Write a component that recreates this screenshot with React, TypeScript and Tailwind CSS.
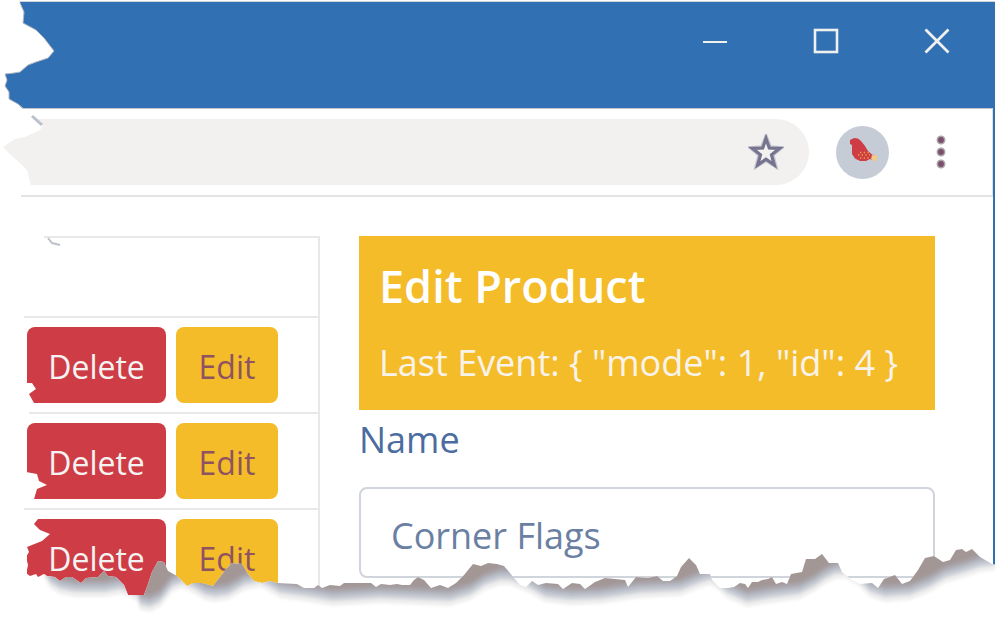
import React from 'react';

const products = [1, 2, 3];

const jagged =
  '0,573 26,573 30,576 36,574 38,577 44,574 47,576 55,577 60,581 66,577 72,577 81,583 86,578 98,577 104,571 108,576 116,577 124,585 128,595 144,595 148,584 152,572 158,561 164,562 168,571 177,576 187,586 193,583 202,583 213,586 220,577 226,569 232,563 242,564 248,574 254,581 262,583 270,581 277,583 297,584 304,588 314,588 318,585 322,588 330,585 340,586 344,583 371,583 376,587 381,584 390,585 397,584 402,585 410,585 414,580 418,577 424,580 431,588 440,585 448,588 456,583 464,575 473,564 481,566 488,563 497,564 504,566 510,573 514,578 520,585 526,587 532,581 538,585 546,583 558,584 563,589 572,583 580,584 585,589 595,582 605,578 625,580 628,587 636,577 648,578 657,576 663,581 670,581 677,576 681,567 689,558 696,565 700,574 710,574 712,580 720,588 728,588 734,587 740,583 745,584 748,588 752,582 758,582 762,580 768,579 772,577 776,584 782,582 787,584 791,574 802,572 806,559 815,559 822,554 829,563 838,563 842,572 852,580 860,584 872,583 878,588 884,579 895,575 902,584 910,581 918,570 925,558 934,556 943,562 950,560 956,550 962,549 966,552 972,549 980,557 992,564 1000,566 1000,620 0,620';

const shade =
  '43,540 43,575 50,588 60,594 75,597 105,597 120,594 130,597 138,602 140,610 150,612 160,607 172,592 182,588 192,592 205,600 215,602 228,600 245,590 260,587 270,592 280,598 310,602 333,606 380,603 450,606 470,600 485,590 500,585 510,585 528,592 545,602 570,605 600,604 640,598 680,596 700,588 710,585 716,588 727,598 747,607 770,603 800,599 815,591 825,584 835,579 845,578 858,585 870,597 885,602 910,600 930,592 945,583 965,577 980,572 995,570 995,540';

function BottomTear() {
  return (
    <svg
      aria-hidden="true"
      className="pointer-events-none absolute bottom-0 left-0 h-[77px] w-full"
      viewBox="0 540 1000 77"
      preserveAspectRatio="none"
    >
      <defs>
        <clipPath id="edge">
          <polygon points={jagged} />
        </clipPath>
        <filter id="soft" x="-5%" y="-20%" width="110%" height="140%">
          <feGaussianBlur stdDeviation="1.5" />
        </filter>
      </defs>
      <g clipPath="url(#edge)">
        <rect y="540" width="1000" height="80" fill="#fff" />
        <g filter="url(#soft)">
          <polygon points={shade} fill="#efeeee" />
          <polygon points={shade} fill="#cdd1d8" transform="translate(0 -5)" />
          <polygon points={shade} fill="#b8bcc6" transform="translate(0 -9)" />
          <polygon points={shade} fill="#a9a5ab" transform="translate(0 -13)" />
          <polygon points={shade} fill="#a39796" transform="translate(0 -17)" />
        </g>
      </g>
    </svg>
  );
}

function LeftTear() {
  return (
    <svg
      aria-hidden="true"
      className="pointer-events-none absolute left-0 top-0"
      width="70"
      height="600"
      viewBox="0 0 70 600"
    >
      <path
        fill="#fff"
        d="M0 0H19L24 12L23 23L36 30L44 38L54 51L48 58L36 62L28 65L20 72L14 73L5 74L7 80L5 86L9 92V99L18 104L23 109L28 112L34 119L43 125L40 130L25 137L15 139L3 147L12 156L20 163L27 170L31 186L21 195V200H0Z"
      />
      <path
        fill="#fff"
        d="M0 225H44V238L30 260L24 300V318L26 324V383L32 383L36 389L29 394L34 403L29 410V416L26 424V472L37 474L39 481L47 485L37 489L34 499L24 506V512L38 519L34 524L40 530L50 534L42 541L27 547L29 552L26 557L28 565L26 575L20 600H0Z"
      />
      <path
        fill="none"
        stroke="#b3b7c0"
        strokeWidth="1"
        d="M20 3L24 12L23 23L36 30L44 38L54 51L48 58L36 62L28 65L20 72L14 73L5 74L7 80L5 86L9 92V99L18 104L23 108"
      />
      <path stroke="#b9c0cc" strokeWidth="3" d="M32 116L42 125" />
      <path fill="none" stroke="#bcc2cc" strokeWidth="2" d="M48 238L52 243L60 245" />
    </svg>
  );
}

const iconButton = 'flex h-8 w-8 items-center justify-center';

export default function App() {
  return (
    <div className="relative overflow-hidden bg-white pr-[5px] pt-px font-['Open_Sans','Noto_Sans',sans-serif]">
      <div className="border-t border-[#cfd3da]">
        <header className="flex h-[106px] items-start justify-end gap-[79px] bg-[#3070b3] pr-[42px] pt-[23px]">
          <button aria-label="Minimize" className={iconButton}>
            <svg width="26" height="26" viewBox="0 0 26 26" fill="none" stroke="#f0f0ef" strokeWidth="2">
              <path d="M1 14H25" />
            </svg>
          </button>
          <button aria-label="Maximize" className={iconButton}>
            <svg width="26" height="26" viewBox="0 0 26 26" fill="none" stroke="#f0f0ef" strokeWidth="2.6">
              <rect x="2" y="2" width="22" height="22" />
            </svg>
          </button>
          <button aria-label="Close" className={iconButton}>
            <svg width="26" height="26" viewBox="0 0 26 26" fill="none" stroke="#f0f0ef" strokeWidth="2.8">
              <path d="M1.500 1.500L24.500 24.500M24.500 1.500L1.500 24.500" />
            </svg>
          </button>
        </header>

        <div className="border-r-2 border-[#3070b3]">
          <nav className="flex h-[89px] items-center border-b-2 border-r border-t border-b-[#e4e4e6] border-r-[#dcdfe4] border-t-[#c2c5cb] pr-[35px]">
            <div className="flex h-[66px] flex-1 items-center justify-end rounded-r-full bg-[#f2f1f0] pr-[27px]">
              <button aria-label="Bookmark" className={iconButton}>
                <svg width="36" height="36" viewBox="0 0 36 36" className="shrink-0" fill="none">
                  <path
                    d="M18 3L22 13.3L33 14L24.5 21L27.4 32L18 26L8.6 32L11.5 21L3 14L14 13.3Z"
                    stroke="#c3c6cf"
                    strokeWidth="4"
                  />
                  <path
                    d="M18 4.5L21.3 14L31.5 14.5L23.5 20.8L26.3 31L18 25.2L9.7 31L12.5 20.8L4.5 14.5L14.7 14Z"
                    stroke="#75738e"
                    strokeWidth="3.2"
                  />
                </svg>
              </button>
            </div>
            <button
              aria-label="Profile"
              className="ml-[27px] flex h-[53px] w-[53px] items-center justify-center rounded-full bg-[#c5ccd6]"
            >
              <svg width="53" height="53" viewBox="0 0 53 53">
                <path
                  fill="#ce3c46"
                  d="M14 14L18 12L22 12.500L25 15L29 20L32 25L36 28.500L39 30L41 31L39 35L34 33L30 35H24L19 32.500L16 28V19L14 18Z"
                />
                <path fill="#f0c98c" d="M36 29L42 30L41 33L39 36L35 33Z" />
                <path stroke="#e9a53c" strokeWidth="1.3" strokeDasharray="1.3 2.4" d="M24 26.500H33M22 29H34M24 32H35" />
              </svg>
            </button>
            <button aria-label="Menu" className="ml-[36px] flex h-[53px] w-8 items-center justify-center">
              <svg width="10" height="34" viewBox="0 0 10 34" fill="#7d4f6c" stroke="#aaa4ab" strokeWidth="1.5">
                <circle cx="5" cy="5" r="3.7" />
                <circle cx="5" cy="17" r="3.7" />
                <circle cx="5" cy="29" r="3.7" />
              </svg>
            </button>
          </nav>

          <main className="flex items-start gap-[39px] pb-[11px] pr-[58px] pt-[39px]">
            <table className="w-[320px] shrink-0 border-collapse border-2 border-[#e8e8e9]">
              <thead>
                <tr className="h-[80px] border-b-2 border-[#e8e8e9]">
                  <th />
                </tr>
              </thead>
              <tbody className="text-[32px] leading-[48px]">
                {products.map((id) => (
                  <tr key={id} className="h-[96px] border-b-2 border-[#e8e8e9]">
                    <td className="p-0 pl-[25px]">
                      <div className="flex gap-[10px]">
                        <button className="h-[76px] w-[139px] rounded-lg bg-[#ce3c46] pt-[3px] text-[#f5f3f2]">
                          Delete
                        </button>
                        <button className="h-[76px] w-[102px] rounded-lg bg-[#f4bc29] pt-[3px] text-[#8f5260]">
                          Edit
                        </button>
                      </div>
                    </td>
                  </tr>
                ))}
              </tbody>
            </table>

            <section className="min-w-0 flex-1">
              <div className="h-[174px] bg-[#f4bc29] px-5 pt-[18px] text-white">
                <h1 className="whitespace-nowrap text-[45px] font-semibold leading-[64px]">Edit Product</h1>
                <p className="mt-[18px] whitespace-nowrap text-[36px] leading-[54px] text-[#f8f3ea]">
                  Last Event: {'{ "mode": 1, "id": 4 }'}
                </p>
              </div>
              <label htmlFor="name" className="block text-[36px] leading-[60px] text-[#4c6c9f]">
                Name
              </label>
              <input
                id="name"
                defaultValue="Corner Flags"
                className="mt-[17px] h-[91px] w-full rounded-lg border-2 border-[#d0d4db] px-[30px] pt-[6px] text-[36px] text-[#6b7fa3] outline-none"
              />
            </section>
          </main>
        </div>
      </div>
      <LeftTear />
      <BottomTear />
    </div>
  );
}
